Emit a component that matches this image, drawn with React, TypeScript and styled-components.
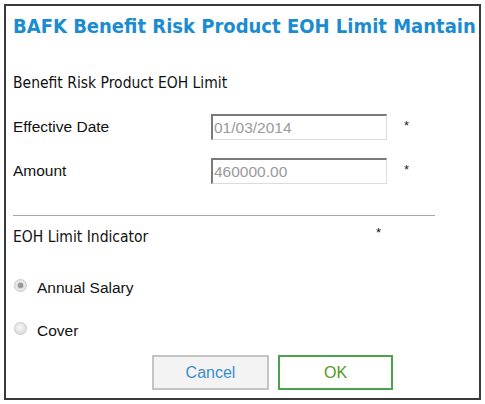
import React, { useState } from 'react';
import styled, { createGlobalStyle } from 'styled-components';

const GlobalStyle = createGlobalStyle`
  html, body {
    margin: 0;
    padding: 0;
    background: #ffffff;
  }
`;

const Dialog = styled.div`
  box-sizing: border-box;
  width: 477px;
  height: 396px;
  margin: 4px 0 0 4px;
  border: 2px solid #3a3a3a;
  padding: 0 0 0 7px;
  display: flex;
  flex-direction: column;
  background: #fff;
  overflow: hidden;
`;

const Title = styled.h1`
  margin: 7px 0 0 0;
  font-family: 'DejaVu Sans', Verdana, sans-serif;
  font-stretch: condensed;
  font-size: 20px;
  line-height: 26px;
  font-weight: bold;
  color: #1b8ccf;
  white-space: nowrap;
`;

const Section = styled.div`
  margin-top: 34px;
  font-family: 'DejaVu Sans', Verdana, sans-serif;
  font-stretch: condensed;
  font-size: 15.5px;
  line-height: 20px;
  color: #111;
`;

const FormGrid = styled.div`
  margin-top: 21px;
  display: grid;
  grid-template-columns: 198px 176px 22px;
  grid-auto-rows: 26px;
  row-gap: 18px;
  align-items: center;
`;

const Label = styled.label`
  font-family: 'Liberation Sans', Arial, sans-serif;
  font-size: 15.5px;
  color: #111;
`;

const Field = styled.input`
  box-sizing: border-box;
  width: 176px;
  height: 26px;
  margin: 0;
  padding: 0 0 0 1px;
  border-style: solid;
  border-width: 2px 1px 1px 2px;
  border-color: #7a7a7a #dcdcdc #dcdcdc #7a7a7a;
  background: #fff;
  font-family: 'Liberation Sans', Arial, sans-serif;
  font-size: 15.5px;
  color: #9a9a9a;
  outline: none;
`;

const Required = styled.span`
  font-family: 'Liberation Sans', Arial, sans-serif;
  font-size: 13px;
  color: #222;
  justify-self: end;
  margin-top: -4px;
`;

const Divider = styled.hr`
  width: 422px;
  margin: 31px 0 0 0;
  border: none;
  border-top: 1px solid #a8a8a8;
`;

const IndicatorRow = styled.div`
  display: flex;
  align-items: flex-start;
  width: 368px;
  margin-top: 11px;
  font-family: 'DejaVu Sans', Verdana, sans-serif;
  font-stretch: condensed;
  font-size: 15.5px;
  line-height: 20px;
  color: #111;
`;

const Star = styled.span`
  margin-left: auto;
  font-family: 'Liberation Sans', Arial, sans-serif;
  font-size: 13px;
  margin-top: -4px;
`;

const RadioGroup = styled.div`
  display: flex;
  flex-direction: column;
  gap: 23px;
  margin-top: 31px;
`;

const RadioRow = styled.label`
  display: flex;
  align-items: center;
  gap: 10px;
  height: 20px;
  font-family: 'Liberation Sans', Arial, sans-serif;
  font-size: 15.5px;
  color: #111;
  cursor: pointer;
`;

const RadioDot = styled.span<{ $checked: boolean }>`
  box-sizing: border-box;
  width: 13px;
  height: 13px;
  margin-left: 1px;
  margin-top: -5px;
  border-radius: 50%;
  border: 1px solid #c9c9c9;
  background: ${(p) =>
    p.$checked
      ? 'radial-gradient(circle, #9a9a9a 0 2.5px, #cfcfcf 3px, #eeeeee 4.5px, #d8d8d8 6px)'
      : 'radial-gradient(circle at 45% 40%, #f8f8f8 0, #e2e2e2 60%, #d4d4d4 100%)'};
`;

const ButtonBar = styled.div`
  display: flex;
  gap: 9px;
  margin: 14px 0 0 139px;
`;

const Button = styled.button<{ $primary?: boolean }>`
  box-sizing: border-box;
  width: ${(p) => (p.$primary ? '115px' : '117px')};
  height: 35px;
  border: 2px solid ${(p) => (p.$primary ? '#4aa34a' : '#c4c4c4')};
  background: ${(p) => (p.$primary ? '#ffffff' : '#f3f3f3')};
  color: ${(p) => (p.$primary ? '#4f9a24' : '#3a8fc7')};
  font-family: 'Liberation Sans', Arial, sans-serif;
  font-size: 16px;
  cursor: pointer;
  padding: 0;
`;

export default function App() {
  const [basis, setBasis] = useState<'salary' | 'cover'>('salary');

  return (
    <>
      <GlobalStyle />
      <Dialog>
        <Title>BAFK Benefit Risk Product EOH Limit Mantain</Title>
        <Section>Benefit Risk Product EOH Limit</Section>
        <FormGrid>
          <Label>Effective Date</Label>
          <Field readOnly value="01/03/2014" />
          <Required>*</Required>
          <Label>Amount</Label>
          <Field readOnly value="460000.00" />
          <Required>*</Required>
        </FormGrid>
        <Divider />
        <IndicatorRow>
          EOH Limit Indicator
          <Star>*</Star>
        </IndicatorRow>
        <RadioGroup>
          <RadioRow onClick={() => setBasis('salary')}>
            <RadioDot $checked={basis === 'salary'} />
            Annual Salary
          </RadioRow>
          <RadioRow onClick={() => setBasis('cover')}>
            <RadioDot $checked={basis === 'cover'} />
            Cover
          </RadioRow>
        </RadioGroup>
        <ButtonBar>
          <Button>Cancel</Button>
          <Button $primary>OK</Button>
        </ButtonBar>
      </Dialog>
    </>
  );
}
